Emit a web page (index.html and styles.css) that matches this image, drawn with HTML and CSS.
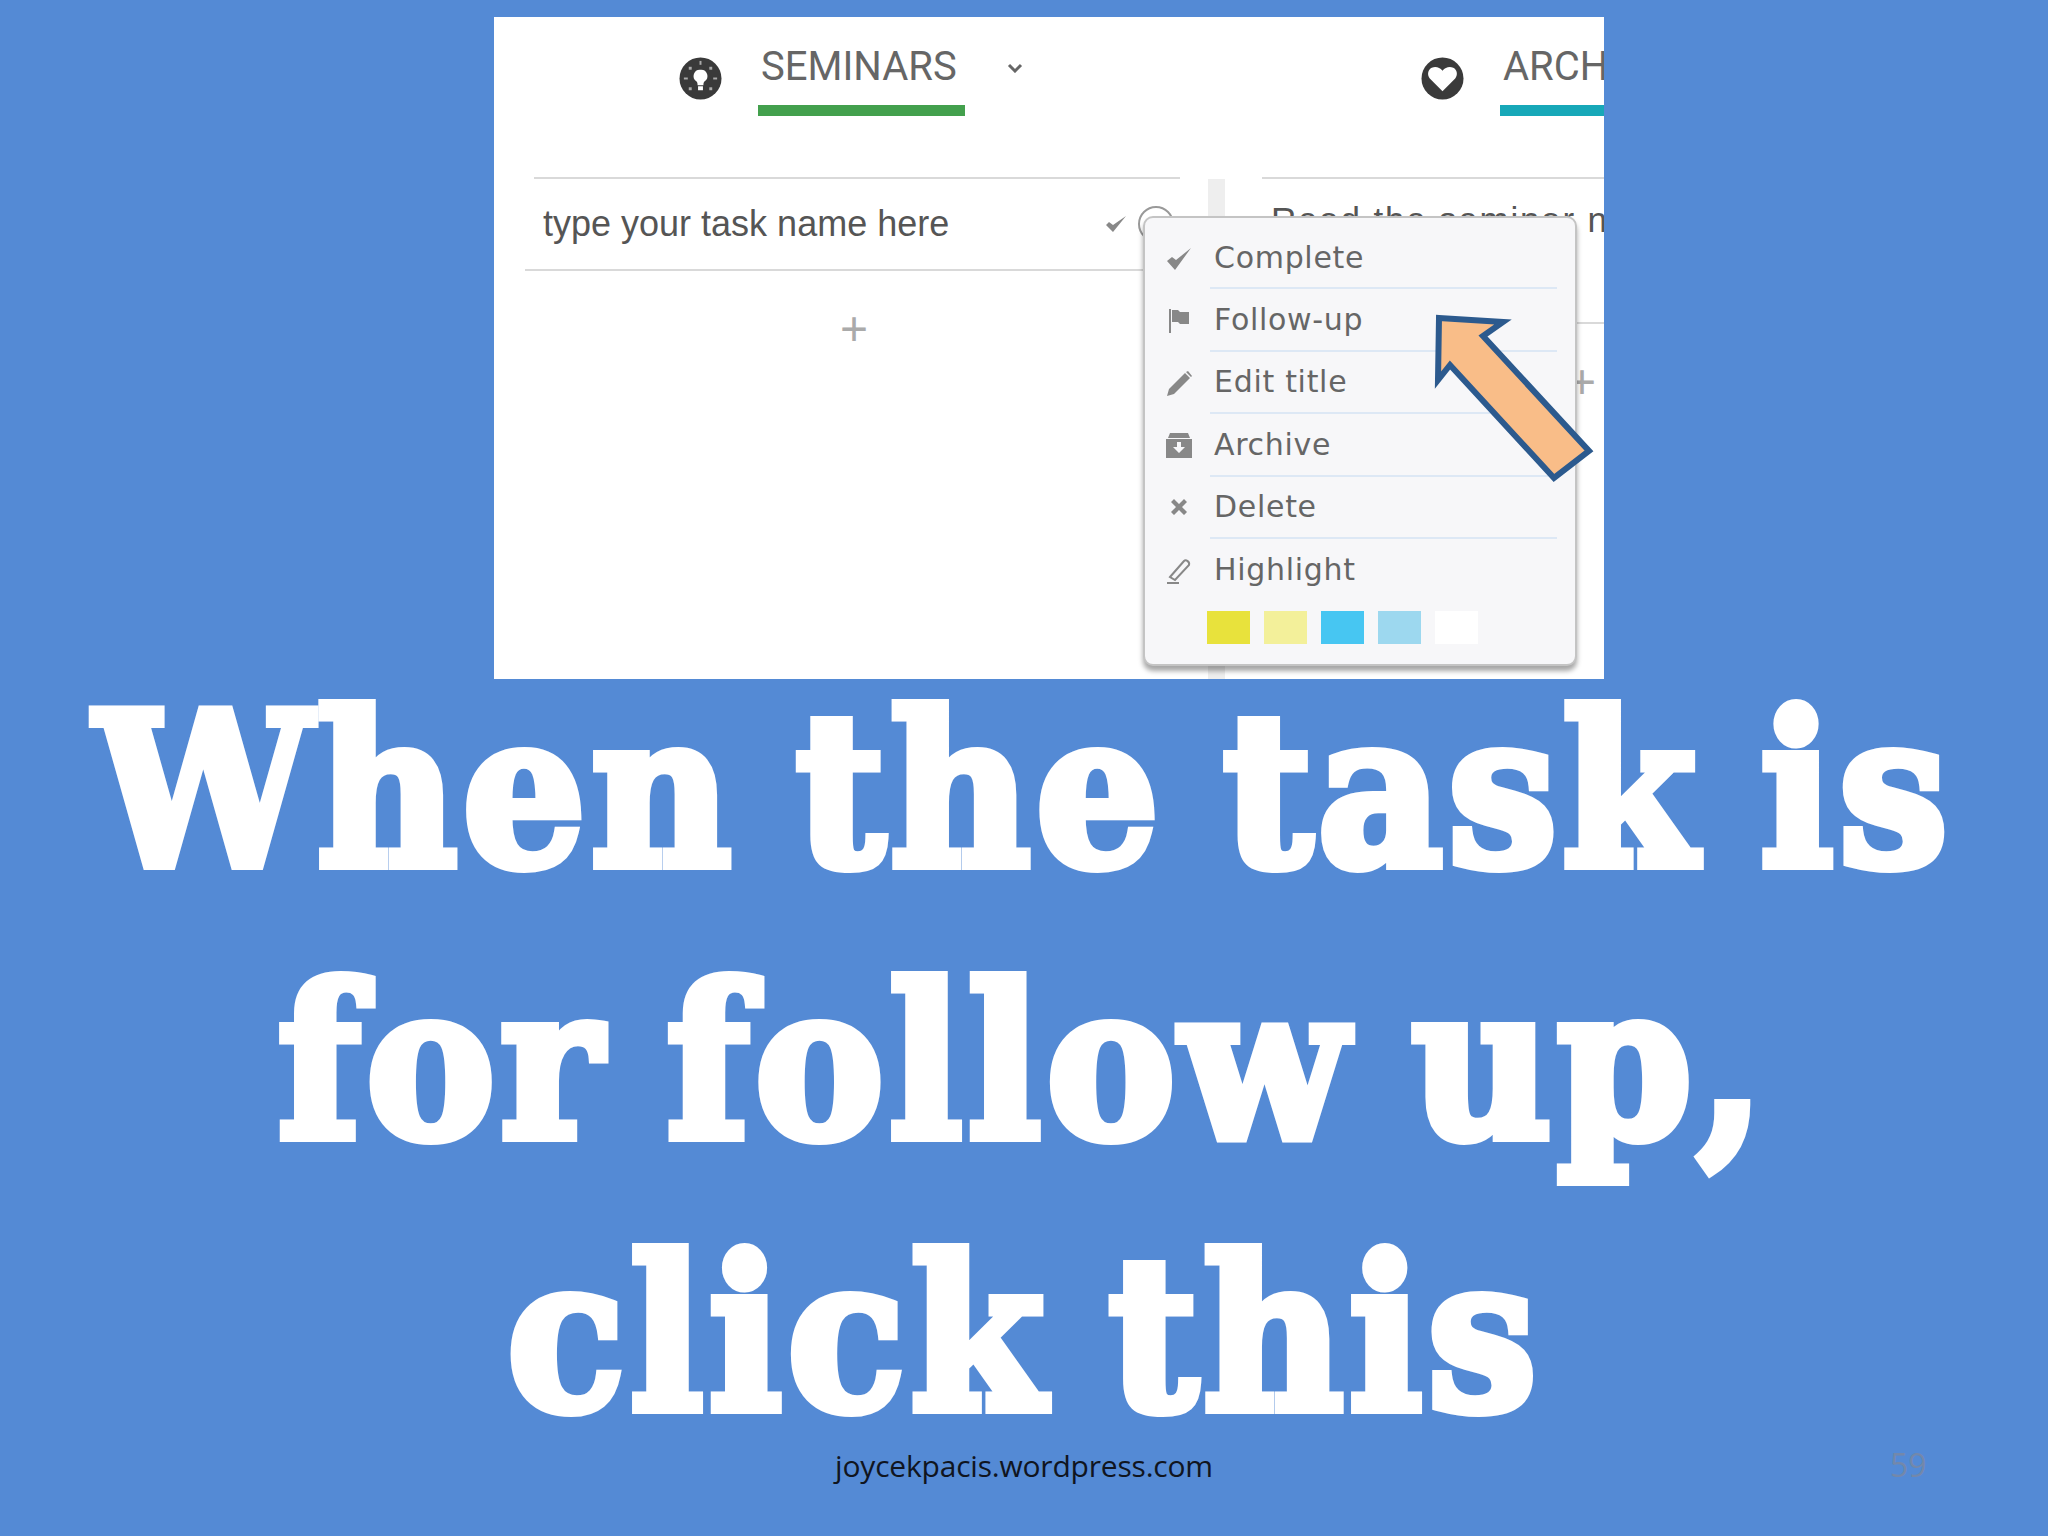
FILE: index.html
```html
<!DOCTYPE html>
<html lang="en">
<head>
<meta charset="utf-8">
<title>When the task is for follow up</title>
<link rel="stylesheet" href="styles.css">
</head>
<body>
<main class="slide">
  <section class="shot">
    <nav class="tabs">
      <div class="tab tab-one">
        <svg class="tab-icon" viewBox="0 0 44 44"><circle cx="22" cy="22" r="21.5" fill="#3a3a3a"/><path d="M22 13a6.500 6.500 0 0 0-4 12c.8 1 1 2 1 4h6c0-2 .2-3 1-4a6.500 6.500 0 0 0-4-12zM19.500 30h5v4h-5z" fill="#fff"/><g fill="#aaa"><rect x="21" y="4" width="2" height="4"/><rect x="5" y="21" width="4" height="2"/><rect x="35" y="21" width="4" height="2"/><rect x="10" y="10" width="3" height="3"/><rect x="31" y="10" width="3" height="3"/><rect x="10" y="31" width="3" height="3"/><rect x="31" y="31" width="3" height="3"/></g></svg>
        <div class="tab-label tab-label-green">SEMINARS</div>
        <svg class="chevron" viewBox="0 0 16 10"><path d="M2 2l6 6 6-6" fill="none" stroke="#666" stroke-width="3"/></svg>
      </div>
      <div class="tab">
        <svg class="tab-icon" viewBox="0 0 44 44"><circle cx="22" cy="22" r="21.5" fill="#3a3a3a"/><path d="M22 35L9 22c-3-4-2-9 2-11 4-1.500 8-.5 11 3 3-3.500 7-4.500 11-3 4 2 5 7 2 11z" fill="#fff"/></svg>
        <div class="tab-label tab-label-teal">ARCHIVE</div>
      </div>
    </nav>
    <div class="board">
      <div class="col col-left">
        <div class="task">
          <span class="task-name">type your task name here</span>
          <svg class="task-check" viewBox="0 0 24 20"><path d="M2 11l7 7L22 2l-13 9-4-3z" fill="#888"/></svg>
          <span class="task-circle"></span>
        </div>
        <div class="add">+</div>
      </div>
      <div class="scroll"></div>
      <div class="col col-right">
        <div class="task">
          <span class="task-name">Read the seminar n</span>
        </div>
        <div class="add add-right">+</div>
      </div>
    </div>

    <div class="menu">
      <div class="menu-row">
        <svg class="menu-icon" viewBox="0 0 26 26"><path d="M1 15l8 9L25 2 10 14l-4-3z" fill="#888"/></svg>
        <span class="menu-text">Complete</span>
      </div>
      <div class="menu-row">
        <svg class="menu-icon" viewBox="0 0 26 26"><path d="M3 1h2v24H3zM6 2h6l2 2h9v12h-9l-2-2H6z" fill="#888"/></svg>
        <span class="menu-text">Follow-up</span>
      </div>
      <div class="menu-row">
        <svg class="menu-icon" viewBox="0 0 26 26"><path d="M1 25l2-7L19 2l5 5L8 23zM20 1l5 5 1-1-4-5z" fill="#888"/></svg>
        <span class="menu-text">Edit title</span>
      </div>
      <div class="menu-row">
        <svg class="menu-icon" viewBox="0 0 26 26"><path d="M4 0h18l2 5H2zM0 6h26v19H0z" fill="#888"/><path d="M11 9h4v5h4l-6 6-6-6h4z" fill="#f7f7f9"/></svg>
        <span class="menu-text">Archive</span>
      </div>
      <div class="menu-row">
        <svg class="menu-icon menu-icon-small" viewBox="0 0 18 18"><path d="M4 1l5 5 5-5 3 3-5 5 5 5-3 3-5-5-5 5-3-3 5-5-5-5z" fill="#888"/></svg>
        <span class="menu-text">Delete</span>
      </div>
      <div class="menu-row menu-row-last">
        <svg class="menu-icon" viewBox="0 0 26 26"><path d="M4 19L18 3c2-2 6 1 5 4L9 22zM1 25h12" fill="none" stroke="#888" stroke-width="2"/></svg>
        <span class="menu-text">Highlight</span>
      </div>
      <div class="swatches">
        <span class="swatch swatch-a"></span>
        <span class="swatch swatch-b"></span>
        <span class="swatch swatch-c"></span>
        <span class="swatch swatch-d"></span>
        <span class="swatch swatch-e"></span>
      </div>
    </div>

    <svg class="arrow" viewBox="0 0 170 170"><path d="M6 4L70 8 50 22 156 137 121 164 17 51 5 66z" fill="#f9bd88" stroke="#2c5a8e" stroke-width="6" stroke-linejoin="miter"/></svg>
  </section>

  <h1 class="title">
    <span class="title-line">When the task is</span>
    <span class="title-line">for follow up,</span>
    <span class="title-line">click this</span>
  </h1>

  <footer class="foot">
    <span class="foot-site">joycekpacis.wordpress.com</span>
    <span class="foot-num">59</span>
  </footer>
</main>
</body>
</html>
```
FILE: styles.css
```css
* { box-sizing: border-box; }
html, body { margin: 0; padding: 0; }
body { width: 2048px; height: 1536px; overflow: hidden; background: #548ad5; }
.slide { width: 2048px; height: 1536px; padding-top: 17px; display: flex; flex-direction: column; }

.shot { position: relative; flex: none; width: 1110px; height: 662px; margin-left: 494px; background: #fff; overflow: hidden; font-family: "Liberation Sans", sans-serif; }

.tabs { display: flex; height: 99px; padding: 33px 0 0 185px; }
.tab { display: flex; flex: none; align-items: flex-start; gap: 36px; }
.tab-one { width: 742px; }
.tab-icon { width: 43px; height: 43px; margin-top: 7px; flex: none; }
.tab-label { width: 207px; height: 66px; padding: 3px 0 0 3px; font-family: Roboto, sans-serif; font-size: 40px; line-height: 28px; color: #666; white-space: nowrap; border-bottom: 11px solid; }
.tab-label-green { border-color: #43a04d; }
.tab-label-teal { border-color: #17a8b8; }
.chevron { width: 16px; height: 10px; margin: 13px 0 0 6px; flex: none; }

.board { display: flex; height: 563px; padding-top: 61px; }
.col { flex: none; }
.col-left { width: 646px; margin-left: 40px; }
.col-right { width: 342px; margin-left: 37px; }
.scroll { width: 17px; flex: none; margin-left: 28px; margin-top: 2px; background: #eee; }
.task { display: flex; align-items: center; height: 94px; border-top: 2px solid #d9d9d9; border-bottom: 2px solid #d9d9d9; padding-left: 9px; position: relative; }
.col-left .task { margin-left: -9px; border-top-color: transparent; }
.col-left::before { content: ""; display: block; height: 2px; background: #d9d9d9; margin-bottom: -2px; position: relative; }
.task-name { font-size: 36px; color: #555; flex: 1; white-space: nowrap; padding-left: 9px; }
.col-right .task { height: 147px; align-items: flex-start; padding-top: 21px; }
.col-right .task-name { padding-left: 0; font-size: 35px; letter-spacing: 1.8px; }
.task-check { width: 24px; height: 20px; flex: none; margin-right: 10px; }
.task-circle { width: 36px; height: 36px; flex: none; border: 2px solid #999; border-radius: 50%; margin-right: 6px; }
.add { text-align: center; font-size: 48px; line-height: 48px; color: #aaa; margin-top: 34px; padding-right: 6px; }
.add-right { position: relative; margin-top: -147px; padding-top: 0; text-align: right; padding-right: 8px; line-height: 48px; top: 181px; }

.menu { position: absolute; left: 649px; top: 199px; width: 434px; height: 450px; background: #f7f7f9; border: 2px solid #c4c4c4; border-radius: 10px; box-shadow: 0 5px 5px rgba(0, 0, 0, .35); padding: 9px 18px 0 65px; }
.menu-row { position: relative; display: flex; align-items: center; height: 62.4px; border-bottom: 2px solid #dde8f5; font-family: "DejaVu Sans", sans-serif; font-size: 30px; color: #666; }
.menu-row-last { border-bottom-color: transparent; }
.menu-text { padding-left: 4px; letter-spacing: .7px; }
.menu-icon { position: absolute; left: -44px; top: 19px; width: 26px; height: 26px; }
.menu-icon-small { left: -40px; width: 18px; height: 18px; top: 21px; }
.swatches { display: flex; gap: 14px; margin-top: 10px; margin-left: -3px; }
.swatch { width: 43px; height: 33px; flex: none; }
.swatch-a { background: #e8e23c; }
.swatch-b { background: #f3f09a; }
.swatch-c { background: #47c6f2; }
.swatch-d { background: #9dd8ef; }
.swatch-e { background: #fff; }

.arrow { position: absolute; left: 939px; top: 297px; width: 170px; height: 170px; overflow: visible; }

.title { margin: -24px 0 0; display: flex; flex-direction: column; align-items: center; font-family: "DejaVu Serif", serif; font-weight: 700; font-size: 212px; line-height: 272px; letter-spacing: 6px; word-spacing: -15px; color: #fff; -webkit-text-stroke: 10px #fff; }
.title-line { display: block; white-space: nowrap; transform: scaleX(.91); }

.foot { position: relative; flex: none; text-align: center; font-family: "Open Sans", sans-serif; font-size: 30px; line-height: 40px; color: #10151f; margin-top: -25px; }
.foot-site { letter-spacing: -.2px; }
.foot-num { position: absolute; left: 1890px; top: -1px; color: #7388ab; font-size: 32px; }
```
